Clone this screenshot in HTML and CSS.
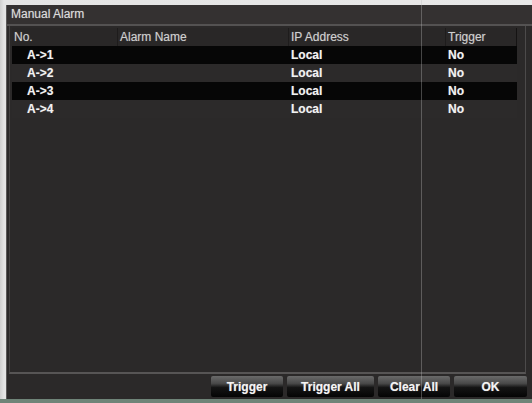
FILE: index.html
```html
<!DOCTYPE html>
<html>
<head>
<meta charset="utf-8">
<title>Manual Alarm</title>
<link rel="stylesheet" href="styles.css">
</head>
<body>
<div class="screen">
  <div class="window">
    <div class="title">Manual Alarm</div>
    <div class="content">
      <div class="grid">
        <div class="hcell">No.</div>
        <div class="hcell">Alarm Name</div>
        <div class="hcell">IP Address</div>
        <div class="hcell last">Trigger</div>

        <div class="cell dark no">A-&gt;1</div>
        <div class="cell dark"></div>
        <div class="cell dark">Local</div>
        <div class="cell dark">No</div>

        <div class="cell no">A-&gt;2</div>
        <div class="cell"></div>
        <div class="cell">Local</div>
        <div class="cell">No</div>

        <div class="cell dark no">A-&gt;3</div>
        <div class="cell dark"></div>
        <div class="cell dark">Local</div>
        <div class="cell dark">No</div>

        <div class="cell no">A-&gt;4</div>
        <div class="cell"></div>
        <div class="cell">Local</div>
        <div class="cell">No</div>
      </div>
    </div>
    <div class="footer">
      <button class="btn w72">Trigger</button>
      <button class="btn w87">Trigger All</button>
      <button class="btn w72">Clear All</button>
      <button class="btn w73">OK</button>
    </div>
  </div>
  <div class="glare"></div>
</div>
</body>
</html>
```

FILE: styles.css
```css
html, body {
  margin: 0;
  padding: 0;
  background: #d9d9d9;
}

.screen {
  position: relative;
  width: 532px;
  height: 403px;
  box-sizing: border-box;
  padding: 5px 0 0 6px;
  background: linear-gradient(to right, #cfcfcf 0, #e4e4e4 4px, #e8e8e8 100%);
  border-bottom: 4px solid #6f8478;
  display: flex;
  font-family: "Liberation Sans", Arial, sans-serif;
  font-size: 12px;
  overflow: hidden;
}

.window {
  flex: 1;
  display: flex;
  flex-direction: column;
  background: #2b2929;
  border-left: 1px solid #5a5858;
}

.title {
  height: 19px;
  line-height: 19px;
  padding-left: 4px;
  color: #dcdcdc;
  background: #343131;
  border-bottom: 2px solid #545252;
  text-shadow: 0 0 1px rgba(255,255,255,0.4);
}

.content {
  flex: 1;
  margin: 0 6px 0 2px;
  padding: 2px 7px 0 2px;
  border-left: 1px solid #444242;
  border-right: 1px solid #4c4a4a;
  border-bottom: 2px solid #575555;
}

.grid {
  display: grid;
  grid-template-columns: 106px 171px 157px 71px;
  grid-auto-rows: 18px;
}

.hcell {
  line-height: 18px;
  padding-left: 2px;
  color: #cfcfcf;
  background: #292727;
  border-right: 1px solid #1e1c1c;
  text-shadow: 0 0 1px rgba(255,255,255,0.35);
}

.hcell.last {
  border-right: 1px solid #151313;
}

.cell {
  line-height: 18px;
  padding-left: 2px;
  color: #f2f2f2;
  font-weight: bold;
  background: #2c2a2a;
  text-shadow: 0 0 1px rgba(255,255,255,0.4);
}

.cell.dark {
  background: #060606;
}

.cell.no {
  padding-left: 15px;
}

.footer {
  height: 25px;
  box-sizing: border-box;
  padding: 2px 5px 2px 0;
  display: flex;
  justify-content: flex-end;
  gap: 4px;
}

.btn {
  height: 21px;
  padding: 0;
  border: none;
  border-radius: 2px;
  font-family: "Liberation Sans", Arial, sans-serif;
  font-size: 12px;
  font-weight: bold;
  color: #f4f4f4;
  background: linear-gradient(to bottom, #6a6a6a 0%, #4a4a4a 35%, #141414 55%, #050505 100%);
  text-shadow: 0 0 1px rgba(255,255,255,0.5);
}

.w72 { width: 72px; }
.w73 { width: 73px; }
.w87 { width: 87px; }

.glare {
  position: absolute;
  left: 421px;
  top: 0;
  width: 1px;
  height: 403px;
  background: rgba(190, 190, 190, 0.35);
}
```
